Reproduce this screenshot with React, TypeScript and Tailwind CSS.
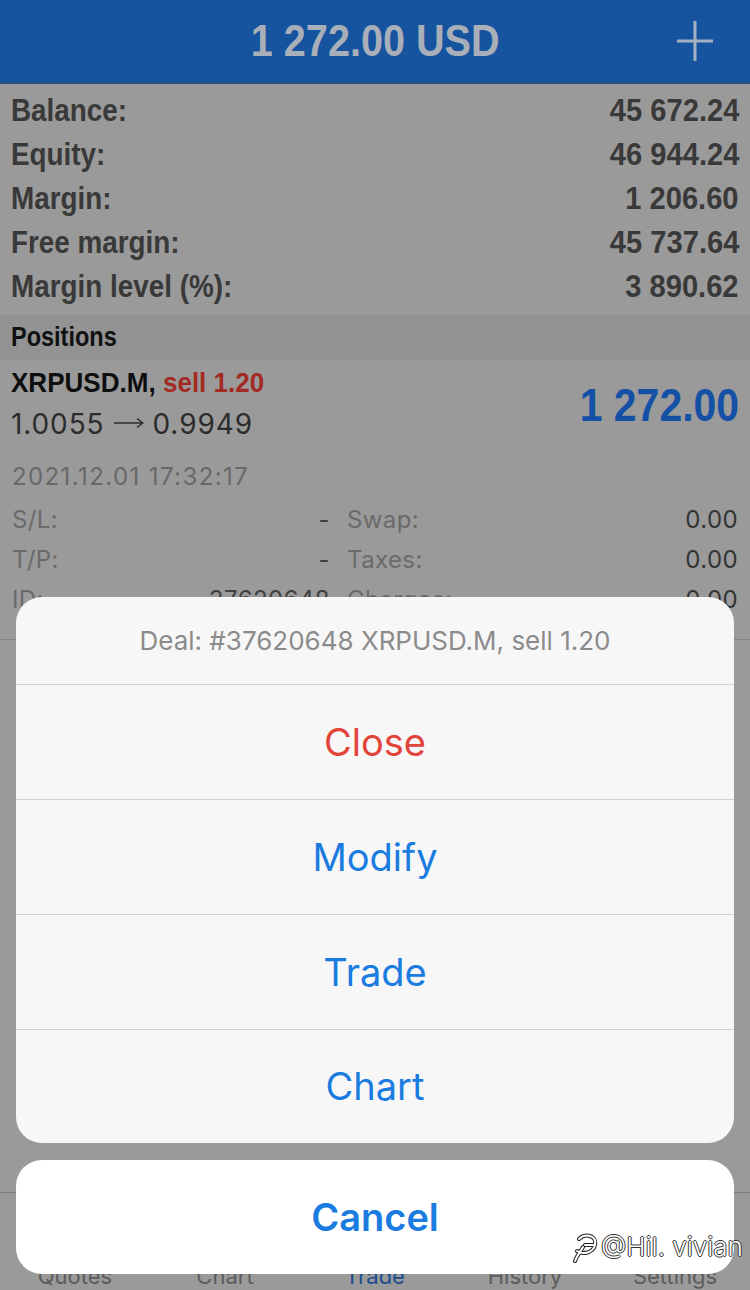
import React from "react";

const COND = "font-['Liberation_Sans',Arial,sans-serif] font-bold";

function Row({ label, value }: { label: string; value: string }) {
  return (
    <div className={`h-[44px] flex items-center justify-between leading-[44px] text-[32px] text-[#393939] ${COND}`}>
      <span className="inline-block origin-left scale-x-[0.87] whitespace-nowrap">{label}</span>
      <span className="inline-block origin-right scale-x-[0.91] whitespace-nowrap">{value}</span>
    </div>
  );
}

function Detail({ l1, v1, l2, v2 }: { l1: string; v1: string; l2: string; v2: string }) {
  return (
    <div className="grid grid-cols-[318px_1fr] gap-x-[17px] h-[40px] leading-[40px] text-[24px] tracking-[0.4px]">
      <div className="flex justify-between">
        <span className="text-[#6a6a6a]">{l1}</span>
        <span className="text-[#404040]">{v1}</span>
      </div>
      <div className="flex justify-between">
        <span className="text-[#6a6a6a]">{l2}</span>
        <span className="text-[#333333]">{v2}</span>
      </div>
    </div>
  );
}

export default function App() {
  return (
    <div className="relative w-[750px] h-[1290px] overflow-hidden bg-[#9a9a9a] font-['Inter',sans-serif] flex flex-col">
      {/* Header */}
      <div className="h-[84px] shrink-0 bg-[#1654a0] border-b-2 border-[#2b4d77] flex items-center">
        <div className="w-[110px]" />
        <div className="flex-1 flex justify-center">
          <span className={`inline-block scale-x-[0.9] text-[44px] leading-none text-[#a9afb8] whitespace-nowrap ${COND}`}>
            1 272.00 USD
          </span>
        </div>
        <div className="w-[110px] flex justify-center pr-[1px]">
          <svg width="40" height="42" viewBox="0 0 40 42">
            <path d="M20 1 V41 M2 21 H38" stroke="#a3b1c3" strokeWidth="3" fill="none" />
          </svg>
        </div>
      </div>

      {/* Account summary */}
      <div className="pt-[4px] pl-[11px] pr-[11px]">
        <Row label="Balance:" value="45 672.24" />
        <Row label="Equity:" value="46 944.24" />
        <Row label="Margin:" value="1 206.60" />
        <Row label="Free margin:" value="45 737.64" />
        <Row label="Margin level (%):" value="3 890.62" />
      </div>

      {/* Positions header */}
      <div className={`mt-[7px] h-[45px] bg-[#939393] pl-[11px] leading-[45px] text-[27px] text-[#111111] ${COND}`}>
        <span className="inline-block origin-left scale-x-[0.87]">Positions</span>
      </div>

      {/* Position item */}
      <div className="pt-[5px] pb-[19px] border-b border-[#858585]">
        <div className="flex items-center justify-between pl-[11px] pr-[11px]">
          <div>
            <div className={`h-[36px] leading-[36px] text-[28px] ${COND}`}>
              <span className="inline-block origin-left scale-x-[0.93] whitespace-nowrap text-[#0e0e0e]">
                XRPUSD.M, <span className="text-[#a32a22]">sell 1.20</span>
              </span>
            </div>
            <div className="mt-[3px] h-[40px] leading-[40px] text-[28px] tracking-[0.9px] text-[#2c2c2c] whitespace-nowrap flex items-center">
              <span>1.0055</span>
              <svg className="mx-[9px] -translate-y-[1px]" width="30" height="12" viewBox="0 0 30 12">
                <path d="M0 6 H28.5 M23 1.5 L28.8 6 L23 10.5" stroke="#2c2c2c" strokeWidth="1.4" fill="none" />
              </svg>
              <span>0.9949</span>
            </div>
          </div>
          <span className={`inline-block origin-right scale-x-[0.89] text-[46px] leading-none text-[#1350a6] whitespace-nowrap ${COND}`}>
            1 272.00
          </span>
        </div>
        <div className="mt-[13px] pl-[12px] h-[40px] leading-[40px] text-[24px] tracking-[1.4px] text-[#686868] whitespace-nowrap">
          2021.12.01 17:32:17
        </div>
        <div className="mt-[3px] pl-[12px] pr-[12px]">
          <Detail l1="S/L:" v1="-" l2="Swap:" v2="0.00" />
          <Detail l1="T/P:" v1="-" l2="Taxes:" v2="0.00" />
          <Detail l1="ID:" v1="37620648" l2="Charges:" v2="0.00" />
        </div>
      </div>

      <div className="flex-1" />

      {/* Tab bar */}
      <div className="h-[98px] shrink-0 border-t border-[#7e7e7e] grid grid-cols-5 items-end pb-[1px] text-[22px] leading-[26px] text-center">
        <span className="text-[#5c5c5c]">Quotes</span>
        <span className="text-[#5c5c5c]">Chart</span>
        <span className="text-[#1d4c8e]">Trade</span>
        <span className="text-[#5c5c5c]">History</span>
        <span className="text-[#5c5c5c]">Settings</span>
      </div>

      {/* Action sheet */}
      <div className="absolute left-[16px] right-[16px] top-[597px] flex flex-col gap-[17px]">
        <div className="rounded-[26px] bg-[#f7f7f7] overflow-hidden flex flex-col">
          <div className="h-[88px] flex items-center justify-center border-b border-[#d3d3d3] text-[26px] text-[#8b8b8b] whitespace-nowrap">
            Deal: #37620648 XRPUSD.M, sell 1.20
          </div>
          <div className="h-[115px] flex items-center justify-center border-b border-[#d3d3d3] text-[38px] text-[#e2443a]">
            Close
          </div>
          <div className="h-[115px] flex items-center justify-center border-b border-[#d3d3d3] text-[38px] text-[#1a7be0]">
            Modify
          </div>
          <div className="h-[115px] flex items-center justify-center border-b border-[#d3d3d3] text-[38px] text-[#1a7be0]">
            Trade
          </div>
          <div className="h-[113px] flex items-center justify-center text-[38px] text-[#1a7be0]">
            Chart
          </div>
        </div>
        <div className="h-[114px] rounded-[26px] bg-white flex items-center justify-center text-[38px] font-semibold text-[#1a7be0]">
          Cancel
        </div>
      </div>

      {/* Watermark */}
      <div className="absolute left-[571px] top-[1231px] flex items-center gap-[2px]">
        <svg width="28" height="32" viewBox="0 0 28 32">
          <g fill="none" strokeLinecap="round">
            <path d="M8 8 C 14 2, 26 4, 24 14 C 22 22, 12 24, 6 20 M14 14 H24 M4 30 C 6 24, 10 20, 12 16" stroke="#222" strokeWidth="4" />
            <path d="M8 8 C 14 2, 26 4, 24 14 C 22 22, 12 24, 6 20 M14 14 H24 M4 30 C 6 24, 10 20, 12 16" stroke="#fff" strokeWidth="2" />
          </g>
        </svg>
        <span className="text-[26px] font-light leading-none text-white whitespace-nowrap [text-shadow:1px_0_0_#333,-1px_0_0_#333,0_1px_0_#333,0_-1px_0_#333]">
          @Hil. vivian
        </span>
      </div>
    </div>
  );
}
